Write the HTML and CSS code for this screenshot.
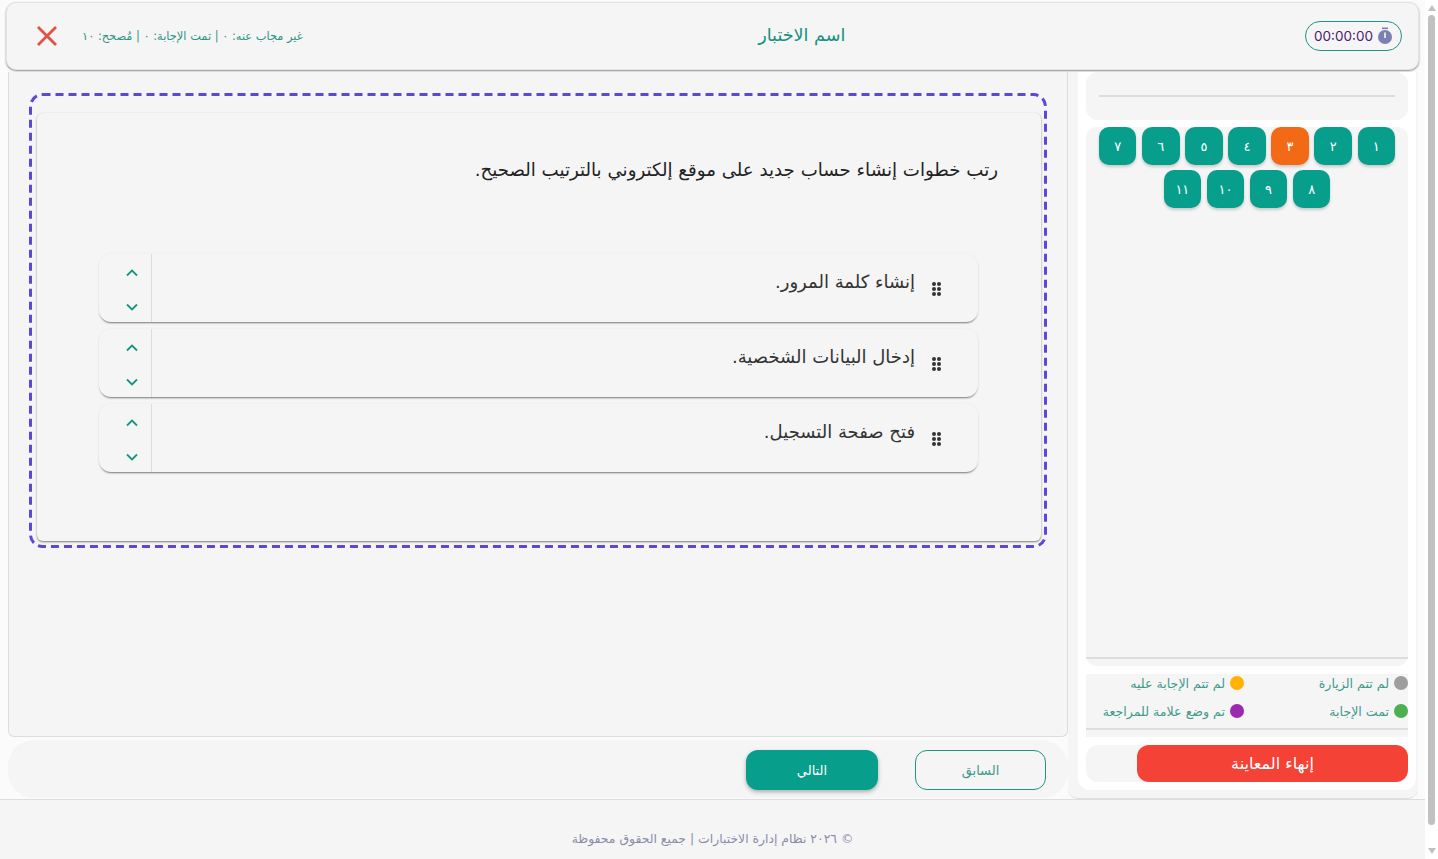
FILE: index.html
```html
<!DOCTYPE html>
<html lang="ar" dir="rtl">

<head>
    <meta charset="UTF-8">
    <title>اسم الاختبار</title>
    <link rel="stylesheet" href="styles.css">
</head>

<body>
    <div class="page">
        <header class="topbar">
            <div class="timer" dir="ltr">
                <span>00:00:00</span>
                <svg class="timer-icon" viewBox="0 0 16 18" width="16" height="18">
                    <rect x="5" y="0.5" width="6" height="1.6" fill="#7b80b3" />
                    <circle cx="8" cy="10" r="7" fill="#7b80b3" />
                    <rect x="7.2" y="5.5" width="1.6" height="5.5" fill="#f5f5f5" />
                </svg>
            </div>
            <h1 class="exam-title">اسم الاختبار</h1>
            <div class="topbar-end">
                <span class="stats">غير مجاب عنه: ٠ | تمت الإجابة: ٠ | مُصحح: ١٠</span>
                <button class="close-btn">
                    <svg viewBox="0 0 22 22" width="22" height="22">
                        <path d="M2 2 L20 20 M20 2 L2 20" stroke="#e05243" stroke-width="2.8" fill="none" />
                    </svg>
                </button>
            </div>
        </header>

        <div class="layout">
            <aside class="sidebar">
                <div class="sidebar-inner">
                    <div class="progress-box">
                        <div class="progress-line"></div>
                    </div>
                    <div class="numbers-box">
                        <div class="numbers">
                            <button class="num">١</button>
                            <button class="num">٢</button>
                            <button class="num current">٣</button>
                            <button class="num">٤</button>
                            <button class="num">٥</button>
                            <button class="num">٦</button>
                            <button class="num">٧</button>
                            <button class="num">٨</button>
                            <button class="num">٩</button>
                            <button class="num">١٠</button>
                            <button class="num">١١</button>
                        </div>
                    </div>
                    <div class="legend-box">
                        <div class="legend">
                            <div class="legend-item"><i class="dot grey"></i>لم تتم الزيارة</div>
                            <div class="legend-item"><i class="dot amber"></i>لم تتم الإجابة عليه</div>
                            <div class="legend-item"><i class="dot green"></i>تمت الإجابة</div>
                            <div class="legend-item"><i class="dot purple"></i>تم وضع علامة للمراجعة</div>
                        </div>
                    </div>
                    <div class="finish-box">
                        <button class="finish-btn">إنهاء المعاينة</button>
                    </div>
                </div>
            </aside>

            <main class="main">
                <section class="panel">
                    <div class="dashed">
                        <svg class="dashed-frame" width="1018" height="455">
                            <rect x="1.5" y="1.5" width="1015" height="452" rx="12" />
                        </svg>
                        <div class="question-card">
                            <p class="question">رتب خطوات إنشاء حساب جديد على موقع إلكتروني بالترتيب الصحيح.</p>
                            <div class="options">
                                <div class="option">
                                    <div class="option-body">
                                        <span class="grip"><i></i><i></i><i></i><i></i><i></i><i></i></span>
                                        <span class="option-text">إنشاء كلمة المرور.</span>
                                    </div>
                                    <div class="arrows">
                                        <svg viewBox="0 0 12 8" width="12" height="8"><path d="M1 6.5 L6 1.5 L11 6.5" /></svg>
                                        <svg viewBox="0 0 12 8" width="12" height="8"><path d="M1 1.5 L6 6.5 L11 1.5" /></svg>
                                    </div>
                                </div>
                                <div class="option">
                                    <div class="option-body">
                                        <span class="grip"><i></i><i></i><i></i><i></i><i></i><i></i></span>
                                        <span class="option-text">إدخال البيانات الشخصية.</span>
                                    </div>
                                    <div class="arrows">
                                        <svg viewBox="0 0 12 8" width="12" height="8"><path d="M1 6.5 L6 1.5 L11 6.5" /></svg>
                                        <svg viewBox="0 0 12 8" width="12" height="8"><path d="M1 1.5 L6 6.5 L11 1.5" /></svg>
                                    </div>
                                </div>
                                <div class="option">
                                    <div class="option-body">
                                        <span class="grip"><i></i><i></i><i></i><i></i><i></i><i></i></span>
                                        <span class="option-text">فتح صفحة التسجيل.</span>
                                    </div>
                                    <div class="arrows">
                                        <svg viewBox="0 0 12 8" width="12" height="8"><path d="M1 6.5 L6 1.5 L11 6.5" /></svg>
                                        <svg viewBox="0 0 12 8" width="12" height="8"><path d="M1 1.5 L6 6.5 L11 1.5" /></svg>
                                    </div>
                                </div>
                            </div>
                        </div>
                    </div>
                </section>
                <nav class="pager">
                    <button class="pager-btn prev">السابق</button>
                    <button class="pager-btn next">التالي</button>
                </nav>
            </main>
        </div>

        <footer class="footer">© ٢٠٢٦ نظام إدارة الاختبارات | جميع الحقوق محفوظة</footer>
    </div>

    <div class="scrollbar">
        <span class="arrow-up"></span>
        <span class="thumb"></span>
        <span class="arrow-down"></span>
    </div>
</body>

</html>
```

FILE: styles.css
```css
* {
    padding: 0;
    margin: 0;
    box-sizing: border-box;
}

html,
body {
    width: 100%;
    height: 100%;
    overflow: hidden;
}

body {
    display: flex;
    flex-direction: row-reverse;
    background-color: #fbfbfb;
    font-family: "DejaVu Sans", "Noto Sans", sans-serif;
}

button {
    font-family: inherit;
    border: none;
    background: none;
}

.page {
    flex: 1;
    display: flex;
    flex-direction: column;
    height: 100%;
}

/* top bar */
.topbar {
    height: 68px;
    margin: 2px 6px 0;
    padding: 0 16px 0 29px;
    display: flex;
    align-items: center;
    justify-content: space-between;
    background-color: #f5f5f5;
    border: 1px solid #e4e4e4;
    border-radius: 10px;
    box-shadow: 0 1px 2px rgba(0, 0, 0, 0.45);
}

.timer {
    width: 97px;
    height: 30px;
    display: flex;
    align-items: center;
    justify-content: center;
    gap: 4px;
    border: 1px solid #1d9486;
    border-radius: 15px;
    color: #4a2070;
    font-family: "Inter", sans-serif;
    font-size: 13.5px;
}

.exam-title {
    padding: 0 4px 2px 0;
    font-size: 17.6px;
    font-weight: normal;
    color: #17917f;
}

.topbar-end {
    display: flex;
    align-items: center;
    gap: 24px;
}

.stats {
    font-size: 11.4px;
    color: #2f9484;
}

.close-btn {
    display: flex;
}

/* layout */
.layout {
    flex: 1;
    display: flex;
    margin: 2px 7px 0 8px;
    min-height: 0;
}

.sidebar {
    width: 350px;
    background-color: #f5f5f5;
    border-radius: 0 0 10px 10px;
    border-bottom: 1px solid #ddd;
}

.sidebar-inner {
    height: 718px;
    margin: 0 2px 0 10px;
    padding: 0 8px 8px;
    display: flex;
    flex-direction: column;
    background-color: #fff;
    border-radius: 0 0 12px 12px;
}

.progress-box {
    height: 48px;
    padding: 23px 13px 0;
    background-color: #f5f5f5;
    border-radius: 12px;
}

.progress-line {
    height: 2px;
    background-color: #ddd;
}

.numbers-box {
    flex: 1;
    margin-top: 7px;
    padding-bottom: 7px;
    background-color: #f5f5f5;
    border-radius: 10px;
    display: flex;
}

.numbers {
    flex: 1;
    padding: 0 13px;
    display: flex;
    flex-wrap: wrap;
    justify-content: center;
    align-content: flex-start;
    gap: 5.4px 5.7px;
    border-bottom: 2px solid #ddd;
}

.num {
    width: 37.4px;
    height: 38px;
    background-color: #089e8c;
    border-radius: 10px;
    color: #fff;
    font-size: 13px;
    box-shadow: 0 2px 3px rgba(0, 0, 0, 0.18);
}

.num.current {
    background-color: #f26a16;
}

.legend-box {
    height: 63px;
    margin-top: 8px;
    padding-bottom: 7px;
    background-color: #f5f5f5;
}

.legend {
    height: 100%;
    display: grid;
    grid-template-columns: 158px 158px;
    grid-template-rows: 18px 38px;
    column-gap: 6px;
    align-items: start;
    border-bottom: 2px solid #ddd;
}

.legend-item {
    display: flex;
    align-items: center;
    height: 18px;
    gap: 5px;
    font-size: 12.6px;
    color: #3f9a8c;
    white-space: nowrap;
}

.legend-item:nth-child(n+3) {
    margin-top: 10px;
}

.dot {
    width: 14px;
    height: 14px;
    border-radius: 50%;
    flex: none;
}

.dot.grey {
    background-color: #9e9e9e;
}

.dot.amber {
    background-color: #ffb300;
}

.dot.green {
    background-color: #4caf50;
}

.dot.purple {
    background-color: #9c27b0;
}

.finish-box {
    height: 37px;
    margin-top: 8px;
    background-color: #f5f5f5;
    border-radius: 12px;
}

.finish-btn {
    width: 271px;
    height: 37px;
    background-color: #f44336;
    border-radius: 12px;
    color: #fff;
    font-size: 16px;
}

/* main column */
.main {
    flex: 1;
    display: flex;
    flex-direction: column;
    gap: 3px;
}

.panel {
    height: 665px;
    padding: 21px 20px 0;
    background-color: #f5f5f5;
    border: 1px solid #ddd;
    border-top: none;
    border-radius: 0 0 6px 6px;
}

.dashed {
    position: relative;
    height: 455px;
    padding: 20px 6px 7px 8px;
}

.dashed-frame {
    position: absolute;
    top: 0;
    left: 0;
}

.dashed-frame rect {
    fill: none;
    stroke: #5a48d9;
    stroke-width: 3;
    stroke-dasharray: 8 5;
}

.question-card {
    height: 428px;
    padding-top: 40px;
    background-color: #f5f5f5;
    border-radius: 6px;
    box-shadow: 0 1px 2px rgba(0, 0, 0, 0.5);
}

.question {
    margin: 0 43px;
    font-size: 18.2px;
    line-height: 34px;
    color: #222;
}

.options {
    margin: 67px 63px 0 62px;
    display: flex;
    flex-direction: column;
    gap: 7px;
}

.option {
    height: 68px;
    display: flex;
    border-radius: 12px;
    background-color: #f5f5f5;
    box-shadow: 0 2px 2px -1px rgba(0, 0, 0, 0.5), 0 0 3px rgba(0, 0, 0, 0.05);
}

.option-body {
    flex: 1;
    display: flex;
    align-items: flex-start;
    padding: 12px 37px 0 0;
    gap: 17px;
}

.grip {
    width: 9px;
    margin-top: 16px;
    display: grid;
    grid-template-columns: 4px 4px;
    gap: 1px;
}

.grip i {
    width: 4px;
    height: 4px;
    border-radius: 50%;
    background-color: #333;
}

.option-text {
    font-size: 18px;
    line-height: 32px;
    color: #333;
}

.arrows {
    width: 53px;
    padding: 4px 13px 0 0;
    display: flex;
    flex-direction: column;
    align-items: flex-start;
    justify-content: center;
    gap: 26px;
    border-right: 1px solid #ddd;
}

.arrows svg path {
    fill: none;
    stroke: #14967f;
    stroke-width: 1.8;
}

.pager {
    height: 58px;
    padding: 10px 22px 0 0;
    display: flex;
    gap: 37px;
    background-color: #f5f5f5;
    border-radius: 26px;
}

.pager-btn {
    width: 131px;
    height: 40px;
    border-radius: 12px;
    font-size: 13px;
}

.pager-btn.prev {
    border: 1px solid #1d9486;
    color: #3f9a8c;
}

.pager-btn.next {
    width: 132px;
    background-color: #089e8c;
    color: #fff;
    box-shadow: 0 2px 4px rgba(0, 0, 0, 0.3);
}

/* footer */
.footer {
    height: 60px;
    padding-top: 30px;
    text-align: center;
    background-color: #f5f5f5;
    border-top: 1px solid #ddd;
    font-size: 12.4px;
    line-height: 18px;
    color: #8a8ca8;
}

/* page scrollbar */
.scrollbar {
    width: 13px;
    height: 100%;
    padding: 5px 2px;
    display: flex;
    flex-direction: column;
    align-items: center;
    background-color: #fff;
}

.thumb {
    flex: 1;
    width: 7px;
    margin: 4px 0 23px;
    background-color: #c1c1c1;
    border-radius: 4px;
}

.arrow-up,
.arrow-down {
    width: 0;
    height: 0;
    border-left: 4px solid transparent;
    border-right: 4px solid transparent;
}

.arrow-up {
    border-bottom: 6px solid #c1c1c1;
}

.arrow-down {
    border-top: 6px solid #c1c1c1;
}
```
